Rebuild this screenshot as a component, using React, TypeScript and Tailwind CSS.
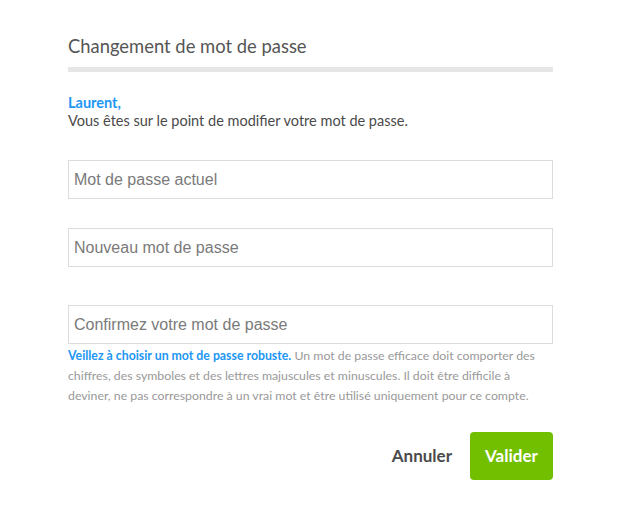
import { useState } from 'react';

const fields = [
  { key: 'current', placeholder: 'Mot de passe actuel', mt: 'mt-[30px]' },
  { key: 'next', placeholder: 'Nouveau mot de passe', mt: 'mt-[29px]' },
  { key: 'confirm', placeholder: 'Confirmez votre mot de passe', mt: 'mt-[38px]' },
];

export default function App() {
  const [values, setValues] = useState<Record<string, string>>({});

  return (
    <div className="min-h-[511px] w-full bg-white font-['Lato',sans-serif]">
      <div className="mx-[68px] w-[485px] pt-[34px]">
        {/* Header */}
        <h1 className="text-[18.4px] leading-[24px] text-[#555555]">Changement de mot de passe</h1>
        <div className="mt-[9px] h-[5px] bg-[#e6e6e6]" />

        {/* Intro */}
        <p className="mt-[22px] text-[14.5px] font-bold leading-[18px] text-[#2196f3]">Laurent,</p>
        <p className="text-[14.5px] leading-[18px] text-[#4a4a4a]">
          Vous êtes sur le point de modifier votre mot de passe.
        </p>

        {/* Fields */}
        {fields.map((f) => (
          <input
            key={f.key}
            type="password"
            value={values[f.key] ?? ''}
            onChange={(e) => setValues({ ...values, [f.key]: e.target.value })}
            placeholder={f.placeholder}
            className={`${f.mt} block h-[39px] w-full border border-[#dcdcdc] px-[5px] font-['Liberation_Sans',sans-serif] text-[16px] text-[#333] outline-none placeholder:text-[#7a7a7a]`}
          />
        ))}

        <p className="mt-[2px] text-[12.3px] leading-[20px] text-[#999999]">
          <span className="font-bold text-[#2196f3]">Veillez à choisir un mot de passe robuste.</span> Un mot de passe
          efficace doit comporter des
          <br />
          chiffres, des symboles et des lettres majuscules et minuscules. Il doit être difficile à
          <br />
          deviner, ne pas correspondre à un vrai mot et être utilisé uniquement pour ce compte.
        </p>

        {/* Actions */}
        <div className="mt-[26px] flex items-center justify-end gap-[18px]">
          <button className="text-[17px] font-bold text-[#4a4a4a]">Annuler</button>
          <button className="h-[48px] w-[83px] rounded-[4px] bg-[#72bf00] text-[17px] font-bold text-white">
            Valider
          </button>
        </div>
      </div>
    </div>
  );
}
